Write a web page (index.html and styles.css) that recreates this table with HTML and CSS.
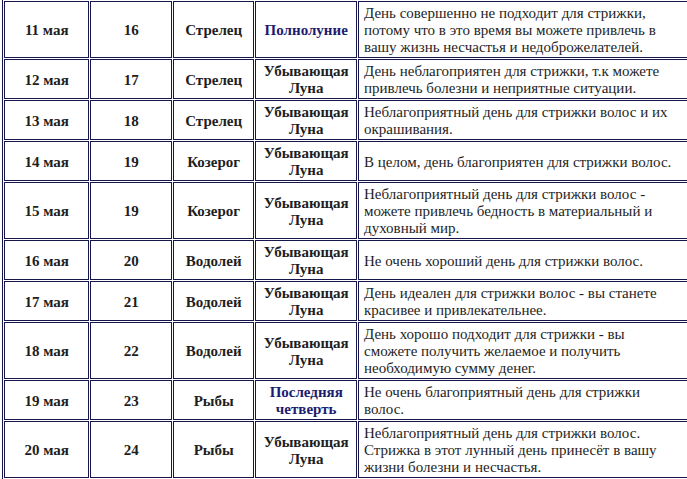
FILE: index.html
```html
<!DOCTYPE html>
<html lang="ru">
<head>
<meta charset="utf-8">
<title>Лунный календарь стрижек</title>
<link rel="stylesheet" href="styles.css">
</head>
<body>
<table class="moon">
  <colgroup>
    <col class="c-date"><col class="c-day"><col class="c-sign"><col class="c-phase"><col class="c-text">
  </colgroup>
  <tr>
    <td class="b">11 мая</td><td class="b">16</td><td class="b">Стрелец</td>
    <td class="b phase">Полнолуние</td>
    <td class="txt">День совершенно не подходит для стрижки,<br>потому что в это время вы можете привлечь в<br>вашу жизнь несчастья и недоброжелателей.</td>
  </tr>
  <tr>
    <td class="b">12 мая</td><td class="b">17</td><td class="b">Стрелец</td>
    <td class="b">Убывающая Луна</td>
    <td class="txt">День неблагоприятен для стрижки, т.к можете<br>привлечь болезни и неприятные ситуации.</td>
  </tr>
  <tr>
    <td class="b">13 мая</td><td class="b">18</td><td class="b">Стрелец</td>
    <td class="b">Убывающая Луна</td>
    <td class="txt">Неблагоприятный день для стрижки волос и их<br>окрашивания.</td>
  </tr>
  <tr>
    <td class="b">14 мая</td><td class="b">19</td><td class="b">Козерог</td>
    <td class="b">Убывающая Луна</td>
    <td class="txt">В целом, день благоприятен для стрижки волос.</td>
  </tr>
  <tr>
    <td class="b">15 мая</td><td class="b">19</td><td class="b">Козерог</td>
    <td class="b">Убывающая Луна</td>
    <td class="txt">Неблагоприятный день для стрижки волос -<br>можете привлечь бедность в материальный и<br>духовный мир.</td>
  </tr>
  <tr>
    <td class="b">16 мая</td><td class="b">20</td><td class="b">Водолей</td>
    <td class="b">Убывающая Луна</td>
    <td class="txt">Не очень хороший день для стрижки волос.</td>
  </tr>
  <tr>
    <td class="b">17 мая</td><td class="b">21</td><td class="b">Водолей</td>
    <td class="b">Убывающая Луна</td>
    <td class="txt">День идеален для стрижки волос - вы станете<br>красивее и привлекательнее.</td>
  </tr>
  <tr>
    <td class="b">18 мая</td><td class="b">22</td><td class="b">Водолей</td>
    <td class="b">Убывающая Луна</td>
    <td class="txt">День хорошо подходит для стрижки - вы<br>сможете получить желаемое и получить<br>необходимую сумму денег.</td>
  </tr>
  <tr>
    <td class="b">19 мая</td><td class="b">23</td><td class="b">Рыбы</td>
    <td class="b phase">Последняя четверть</td>
    <td class="txt">Не очень благоприятный день для стрижки<br>волос.</td>
  </tr>
  <tr>
    <td class="b">20 мая</td><td class="b">24</td><td class="b">Рыбы</td>
    <td class="b">Убывающая Луна</td>
    <td class="txt">Неблагоприятный день для стрижки волос.<br>Стрижка в этот лунный день принесёт в вашу<br>жизни болезни и несчастья.</td>
  </tr>
  <tr class="tail">
    <td class="b">&nbsp;</td><td class="b">&nbsp;</td><td class="b">&nbsp;</td>
    <td class="b">&nbsp;</td>
    <td class="txt">&nbsp;</td>
  </tr>
</table>
</body>
</html>
```

FILE: styles.css
```css
html, body {
  margin: 0;
  padding: 0;
  background: #ffffff;
  overflow: hidden;
}

.moon {
  margin: -1px 0 0 2px;
  border: 1px solid #16164a;
  border-spacing: 1px;
  border-collapse: separate;
  table-layout: fixed;
  width: 700px;
  font-family: "Liberation Serif", "Times New Roman", serif;
  font-size: 15px;
  line-height: 17px;
  color: #1e1e1e;
}

.c-date { width: 85px; }
.c-day { width: 81px; }
.c-sign { width: 81px; }
.c-phase { width: 101px; }
.c-text { width: 340px; }

.moon td {
  border: 1px solid #16164a;
  padding: 3px 4px 1px 5px;
  vertical-align: middle;
  background: #fff;
}

.moon td.b {
  font-weight: bold;
  text-align: center;
  padding-left: 2px;
  padding-right: 2px;
}

.moon td.phase {
  color: #1c1c6e;
}

.moon td.txt {
  white-space: nowrap;
  text-align: left;
}

.moon tr.tail td {
  height: 34px;
}
```
